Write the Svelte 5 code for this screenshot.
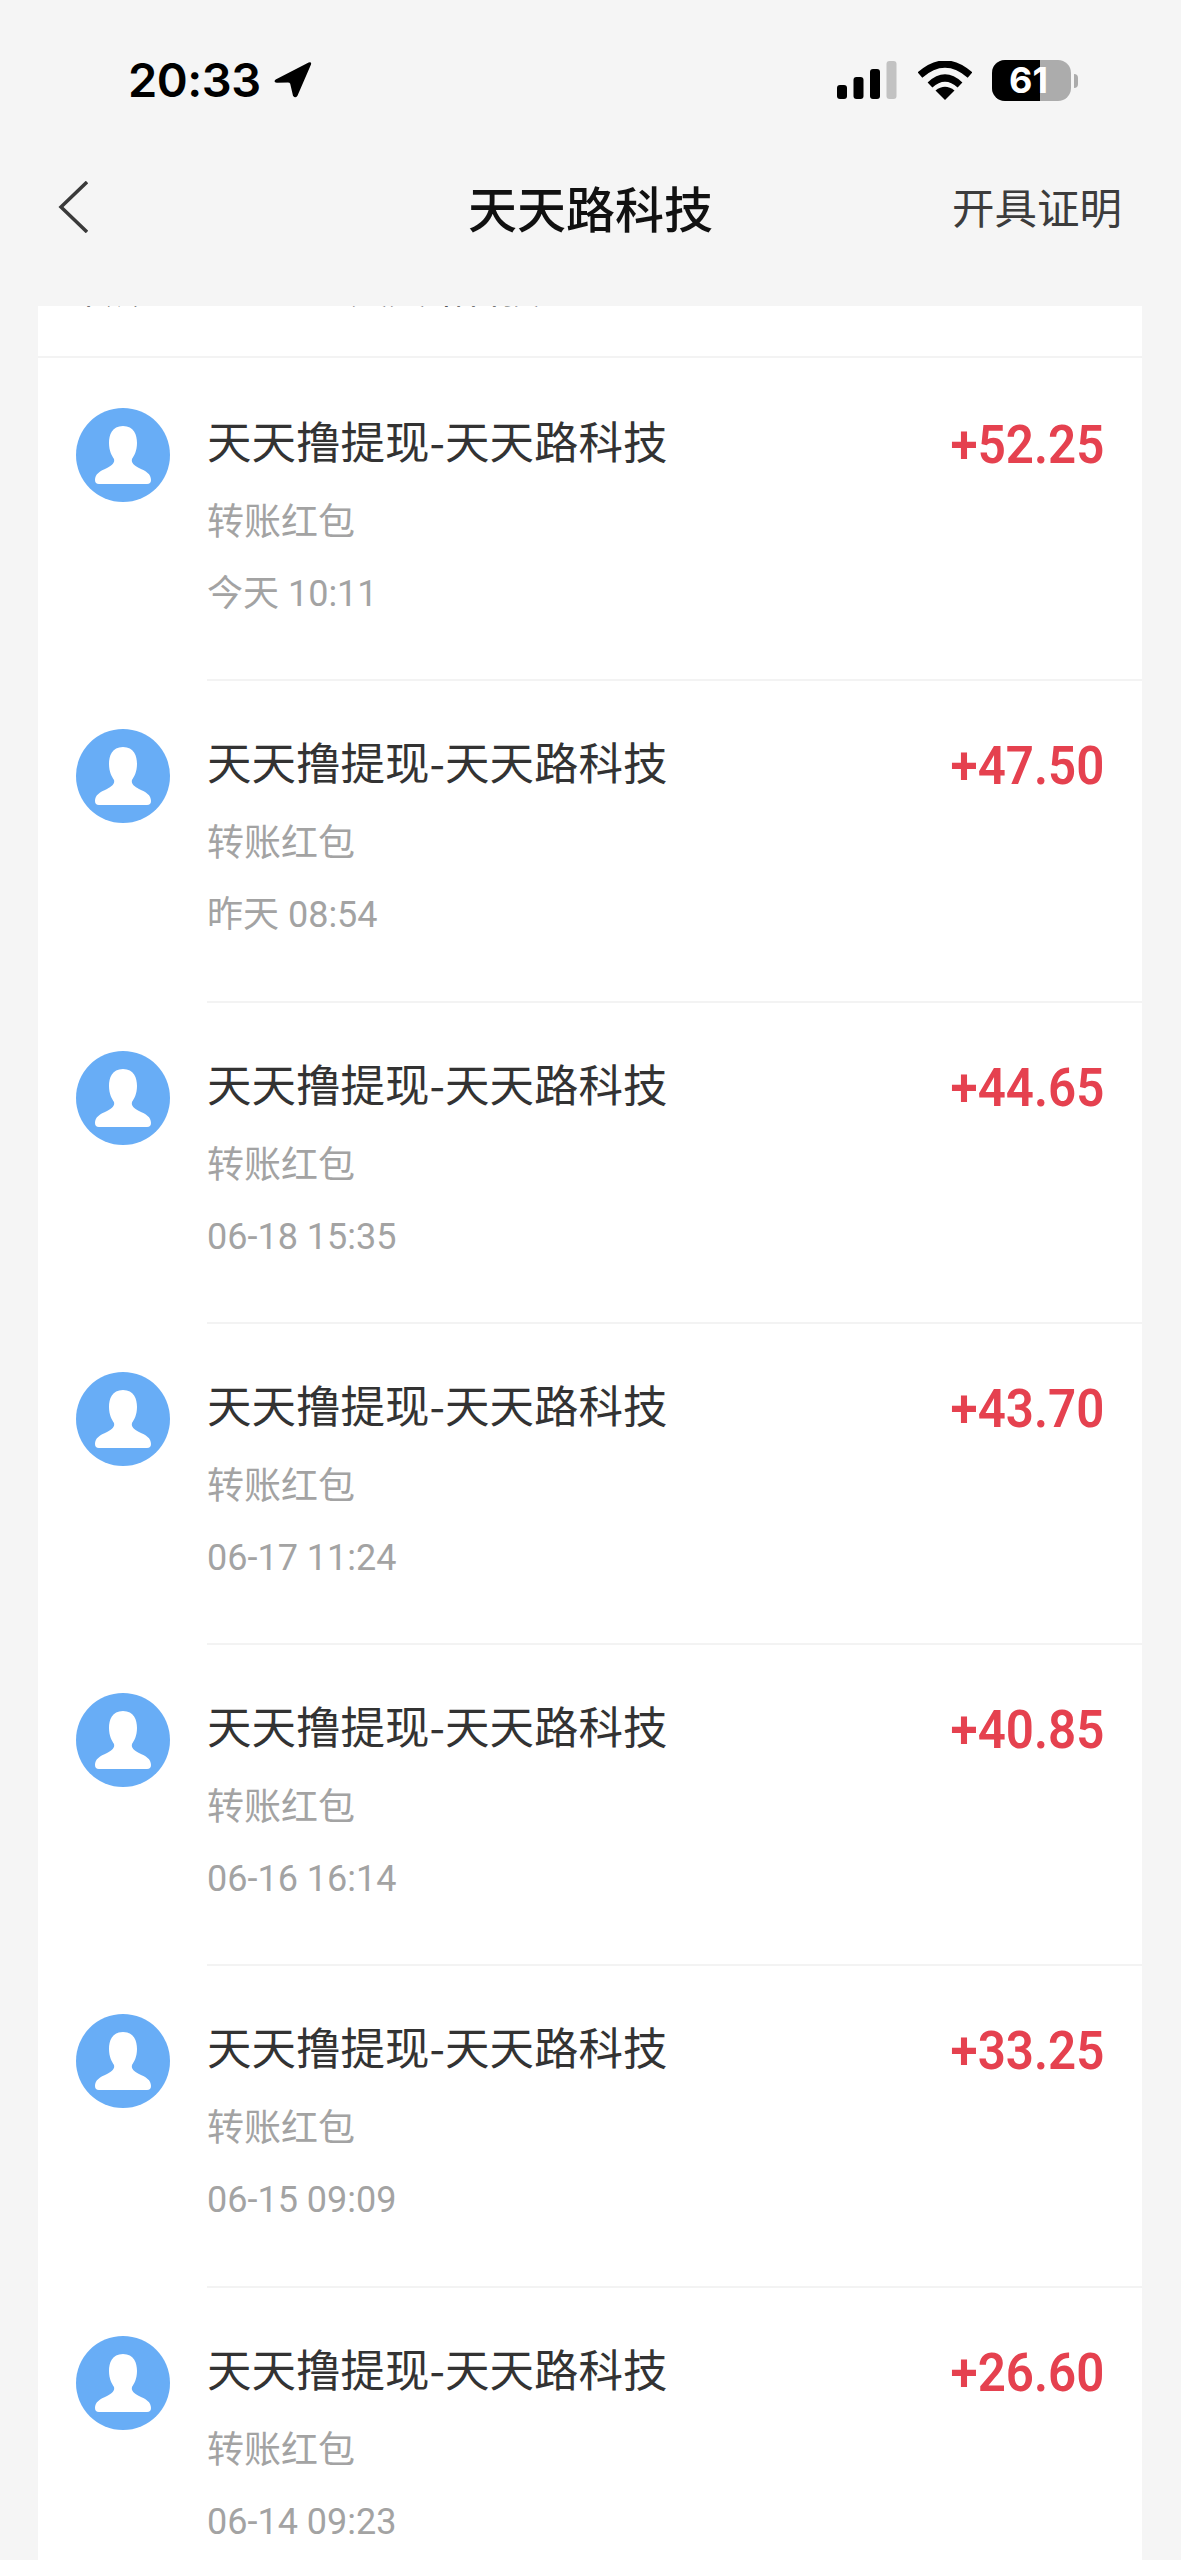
<script>
  const rows = [
    { amount: '+52.25', time: '今天 10:11' },
    { amount: '+47.50', time: '昨天 08:54' },
    { amount: '+44.65', time: '06-18 15:35' },
    { amount: '+43.70', time: '06-17 11:24' },
    { amount: '+40.85', time: '06-16 16:14' },
    { amount: '+33.25', time: '06-15 09:09' },
    { amount: '+26.60', time: '06-14 09:23' }
  ];
</script>

<div class="page">
  <div class="status">
    <div class="left">
      <span class="clock">20:33</span>
      <svg class="loc" viewBox="0 0 34 40" width="38" height="38" preserveAspectRatio="none">
        <path d="M1.500 19.500 L31 1.500 Q34 0.500 33 4 L21 36.500 Q19 40 17 36.500 L14.500 24 Q14 22.500 12.500 22.500 L2.500 23 Q-1 22 1.500 19.500 Z" fill="#000"/>
      </svg>
    </div>
    <div class="right">
      <svg viewBox="0 0 60 40" width="60" height="40" class="sig">
        <rect x="0" y="24" width="10" height="14" rx="3" fill="#000"/>
        <rect x="16.500" y="16" width="10" height="22" rx="3" fill="#000"/>
        <rect x="33" y="8" width="10" height="30" rx="3" fill="#000"/>
        <rect x="49.500" y="0" width="10" height="38" rx="3" fill="#c2c2c2"/>
      </svg>
      <svg viewBox="0 0 54 40" width="54" height="40" class="wifi">
        <path d="M2 14 Q27 -8 52 14" fill="none" stroke="#000" stroke-width="7"/>
        <path d="M12 24 Q27 10 42 24" fill="none" stroke="#000" stroke-width="7"/>
        <path d="M17.500 29.500 Q27 22 36.500 29.500 L27 39 Z" fill="#000"/>
      </svg>
      <div class="batt">
        <div class="cell">
          <div class="fill"></div>
          <span class="pct">61</span>
        </div>
        <div class="nub"></div>
      </div>
    </div>
  </div>

  <div class="nav">
    <svg class="back" viewBox="0 0 30 52" width="30" height="52">
      <path d="M29 1 L3 26 L29 51" fill="none" stroke="#3a3a3a" stroke-width="3.500"/>
    </svg>
    <h1>天天路科技</h1>
    <span class="cert">开具证明</span>
  </div>

  <div class="card">
    <div class="clipped"><span>转账红包</span><span class="b">天天路科技</span></div>
    {#each rows as r}
      <div class="row">
        <div class="avatar">
          <svg viewBox="0 0 94 94" width="94" height="94">
            <circle cx="47" cy="47" r="47" fill="#68adf6"/>
            <path d="M47 18 C36 18 33 27 33 35 C33 43 36 48 38 51 C39 55 36 57 31 60 C24 63 19 66 19 72 Q19 76 23 76 L71 76 Q75 76 75 72 C75 66 70 63 63 60 C58 57 55 55 56 51 C58 48 61 43 61 35 C61 27 58 18 47 18 Z" fill="#fff"/>
          </svg>
        </div>
        <div class="body">
          <div class="top">
            <span class="title">天天撸提现-天天路科技</span>
            <span class="amount">{r.amount}</span>
          </div>
          <div class="sub">转账红包</div>
          <div class="time">{r.time}</div>
        </div>
      </div>
    {/each}
  </div>
</div>

<style>
  :global(body) {
    margin: 0;
    background: #f5f5f5;
  }
  .page {
    width: 1181px;
    height: 2560px;
    overflow: hidden;
    background: #f5f5f5;
    font-family: "Noto Sans CJK SC", "Liberation Sans", sans-serif;
  }
  .status {
    height: 128px;
    box-sizing: border-box;
    padding: 60px 103px 0 128px;
    display: flex;
    justify-content: space-between;
    align-items: flex-start;
  }
  .left {
    display: flex;
    align-items: center;
    gap: 13px;
  }
  .clock {
    font-family: Inter, "Liberation Sans", sans-serif;
    font-weight: 600;
    font-size: 47px;
    line-height: 40px;
    color: #000;
    letter-spacing: -0.5px;
  }
  .right {
    display: flex;
    align-items: center;
  }
  .sig { margin-right: 21px; }
  .wifi { margin-right: 20px; }
  .batt {
    display: flex;
    align-items: center;
    gap: 3px;
  }
  .cell {
    position: relative;
    width: 79px;
    height: 41px;
    border-radius: 13px;
    background: #acacac;
  }
  .fill {
    width: 48px;
    height: 100%;
    border-radius: 13px 0 0 13px;
    background: #000;
  }
  .pct {
    position: absolute;
    left: 17px;
    top: 0;
    font-family: Inter, "Liberation Sans", sans-serif;
    font-weight: 700;
    font-size: 36px;
    line-height: 41px;
    color: #fff;
  }
  .nub {
    width: 4px;
    height: 14px;
    border-radius: 0 4px 4px 0;
    background: #acacac;
  }
  .nav {
    height: 178px;
    box-sizing: border-box;
    padding: 0 59px 0 58px;
    display: flex;
    align-items: flex-start;
    position: relative;
  }
  .back {
    margin-top: 53px;
  }
  h1 {
    margin: 0;
    position: absolute;
    left: 0;
    right: 0;
    top: 47px;
    text-align: center;
    font-size: 49px;
    line-height: 64px;
    font-weight: 500;
    color: #111;
  }
  .cert {
    margin-left: auto;
    margin-top: 49px;
    font-size: 42.500px;
    line-height: 58px;
    color: #3c3c3c;
  }
  .card {
    margin: 0 39px 0 38px;
    background: #fff;
  }
  .clipped {
    height: 50px;
    border-bottom: 2px solid #f3f3f3;
    overflow: hidden;
    position: relative;
  }
  .clipped span {
    position: absolute;
    left: 40px;
    bottom: 44px;
    font-size: 38px;
    line-height: 50px;
    color: #555;
  }
  .clipped .b {
    left: 312px;
  }
  .row {
    height: 321.300px;
    display: flex;
    align-items: flex-start;
    box-sizing: border-box;
    padding-left: 38px;
  }
  .avatar {
    width: 94px;
    height: 94px;
    margin-top: 50px;
    margin-right: 37px;
    flex: none;
  }
  .body {
    flex: 1;
    height: calc(100% + 2px);
    box-sizing: border-box;
    border-bottom: 2px solid #f3f3f3;
    padding-top: 47px;
    padding-right: 38px;
  }
  .top {
    display: flex;
    justify-content: space-between;
    align-items: flex-start;
    height: 70px;
  }
  .title {
    font-size: 44.500px;
    line-height: 70px;
    color: #333;
    white-space: nowrap;
  }
  .amount {
    font-family: Roboto, "Liberation Sans", sans-serif;
    font-weight: 600;
    font-size: 53px;
    line-height: 70px;
    margin-top: 5px;
    color: #e5414f;
    transform: scaleX(0.93);
    transform-origin: right center;
  }
  .sub {
    margin-top: 15px;
    font-size: 37px;
    line-height: 58px;
    color: #a3a3a3;
  }
  .time {
    margin-top: 17px;
    font-family: Roboto, "Noto Sans CJK SC", sans-serif;
    font-size: 36px;
    line-height: 58px;
    color: #a3a3a3;
  }
</style>
